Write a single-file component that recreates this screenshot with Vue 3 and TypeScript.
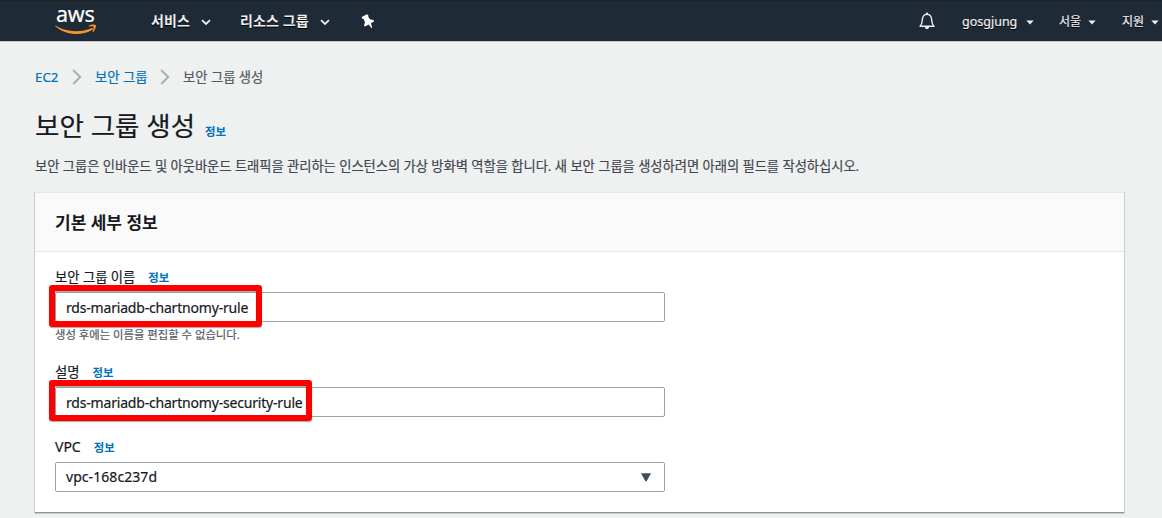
<script setup lang="ts">
interface Account {
  label: string
  kind: string
}

const accounts: Account[] = [
  { label: 'gosgjung', kind: 'user' },
  { label: '서울', kind: 'region' },
  { label: '지원', kind: 'support' },
]
</script>

<template>
  <div class="page">
    <header class="nav">
      <div class="logo">
        <span class="logo-text">aws</span>
        <svg class="smile" viewBox="0 0 42 12" width="42" height="12">
          <path d="M0.7 1.6C10 7.8 25 9.2 36.3 4.2C37.8 3.5 38.7 4.9 37.4 5.8C26 12.7 10 11.2 0.4 2.3C0 1.7 0.2 1.3 0.7 1.6Z" class="orange" />
          <path d="M33.6 1.9C35.6 0.4 39.7 0 40.7 1C41.5 2.2 39.9 6.7 38.1 8.1C37.7 8.4 37.3 8.2 37.5 7.7C38.2 6 39.1 3.4 38.5 2.7C37.9 2 35.5 2.3 34 2.5C33.4 2.6 33.2 2.2 33.6 1.9Z" class="orange" />
        </svg>
      </div>
      <div class="menu services">
        <span class="t">서비스</span>
        <svg class="chev" viewBox="0 0 10 7" width="10" height="7"><path d="M1 1.2L5 5L9 1.2" /></svg>
      </div>
      <div class="menu groups">
        <span class="t">리소스 그룹</span>
        <svg class="chev" viewBox="0 0 10 7" width="10" height="7"><path d="M1 1.2L5 5L9 1.2" /></svg>
      </div>
      <svg class="pin" viewBox="0 0 14 15" width="14" height="15">
        <path d="M0.7 3L6 0.3L7.4 1.4L7.3 3L9.3 5.6L12.6 6L13 7.4L9.9 9.3L11.2 13.7L10.4 14L7.7 10.5L4 12.4L3 11.5L4 8.3L2.8 5.3L1 4.4Z" fill="#fff" />
      </svg>
      <div class="spacer"></div>
      <svg class="bell" viewBox="0 0 18 18" width="18" height="18">
        <path d="M2 14.2C4.5 12 4 9.5 4.4 7C4.8 4.2 6.4 2.4 9 2.4C11.6 2.4 13.2 4.2 13.6 7C14 9.5 13.5 12 16 14.2Z" fill="none" stroke="#eee" stroke-width="1.4" stroke-linejoin="round" />
        <path d="M7.8 2.4V1.6A1.2 1.2 0 0 1 10.2 1.6V2.4ZM6.8 14.7H11.2C11 16.4 10.2 17.1 9 17.1S7 16.4 6.8 14.7Z" fill="#eee" />
      </svg>
      <div v-for="a in accounts" :key="a.kind" class="account" :class="a.kind">
        <span class="t">{{ a.label }}</span>
        <svg class="caret" viewBox="0 0 8 5" width="8" height="5"><path d="M0.3 0.4H7.7L4 4.6Z" fill="#eee" /></svg>
      </div>
    </header>

    <main class="content">
      <nav class="crumbs">
        <a class="c1">EC2</a>
        <svg class="sep" viewBox="0 0 10 16" width="10" height="16"><path d="M1.2 1L8.2 8L1.2 15" /></svg>
        <a class="c2">보안 그룹</a>
        <svg class="sep" viewBox="0 0 10 16" width="10" height="16"><path d="M1.2 1L8.2 8L1.2 15" /></svg>
        <span class="c3">보안 그룹 생성</span>
      </nav>

      <div class="heading">
        <h1>보안 그룹 생성</h1>
        <a class="info">정보</a>
      </div>
      <p class="desc">보안 그룹은 인바운드 및 아웃바운드 트래픽을 관리하는 인스턴스의 가상 방화벽 역할을 합니다. 새 보안 그룹을 생성하려면 아래의 필드를 작성하십시오.</p>

      <section class="card">
        <div class="card-head"><h2>기본 세부 정보</h2></div>
        <div class="card-body">
          <div class="field name">
            <div class="label"><span>보안 그룹 이름</span><a class="info">정보</a></div>
            <div class="input"><span class="value tight">rds-mariadb-chartnomy-rule</span><i class="mark m1"></i></div>
            <div class="hint">생성 후에는 이름을 편집할 수 없습니다.</div>
          </div>
          <div class="field about">
            <div class="label"><span>설명</span><a class="info">정보</a></div>
            <div class="input"><span class="value tight">rds-mariadb-chartnomy-security-rule</span><i class="mark m2"></i></div>
          </div>
          <div class="field">
            <div class="label"><span class="latin">VPC</span><a class="info">정보</a></div>
            <div class="input select">
              <span class="choice">vpc-168c237d</span>
              <svg viewBox="0 0 10 9" width="10" height="9"><path d="M0 0.2H10L5.6 8.2H4.4Z" fill="#414d5c" /></svg>
            </div>
          </div>
        </div>
      </section>
    </main>
  </div>
</template>

<style>
body {
  margin: 0;
  background: #eff1f1;
}
</style>

<style scoped>
.page {
  width: 1162px;
  height: 518px;
  overflow: hidden;
  background: #eff1f1;
  color: #16191f;
  font: 13.3px/20px "Noto Sans", "Noto Sans CJK KR", sans-serif;
  -webkit-text-stroke: 0.2px;
}
.page * {
  box-sizing: border-box;
  white-space: nowrap;
}
svg {
  display: block;
  flex: none;
}
.nav {
  display: flex;
  align-items: center;
  height: 42px;
  border-top: 1px solid #222;
  border-bottom: 1px solid #c3c9cb;
  background: #1e2a36;
  color: #eee;
}
.logo {
  width: 42px;
  margin-left: 55px;
  height: 40px;
}
.logo-text {
  display: block;
  height: 23px;
  padding-left: 1px;
  color: #fff;
  font-size: 21.5px;
  line-height: 25px;
  letter-spacing: -0.2px;
}
.orange {
  fill: #f7902f;
}
.menu,
.account {
  display: flex;
  align-items: center;
}
.menu {
  font-weight: 700;
  font-size: 14px;
  letter-spacing: 0.1px;
  text-shadow: 0 1px 0 #000;
  -webkit-text-stroke: 0;
}
.services {
  margin-left: 54px;
}
.services .t {
  width: 50px;
}
.groups {
  margin-left: 29px;
}
.groups .t {
  width: 80px;
}
.chev {
  margin-top: 2px;
}
.chev path {
  fill: none;
  stroke: #eee;
  stroke-width: 1.8;
}
.pin {
  margin-left: 31px;
}
.spacer {
  flex: 1;
}
.bell {
  margin-right: 26px;
}
.account {
  font-size: 12px;
  text-shadow: 0 1px 0 #000;
}
.account .t {
  padding-top: 2px;
}
.caret {
  margin-top: 2px;
}
.user {
  width: 97px;
}
.user .t {
  width: 64px;
  font-size: 12.5px;
}
.region {
  width: 63px;
}
.region .t,
.support .t {
  width: 29px;
}
.support {
  width: 40px;
}
.content {
  padding: 25px 38px 0 35px;
}
.crumbs {
  display: flex;
  align-items: center;
  height: 20px;
  line-height: 20px;
  color: #545b64;
}
a {
  color: #0073bb;
}
.c1 {
  width: 37px;
}
.c2 {
  width: 65px;
}
.sep {
  margin-right: 13px;
}
.sep path {
  fill: none;
  stroke: #a2b2b2;
  stroke-width: 2;
}
.heading {
  display: flex;
  align-items: baseline;
  height: 40px;
  margin-top: 19px;
}
h1 {
  margin: 0;
  width: 170px;
  font-size: 26.5px;
  line-height: 40px;
  font-weight: 400;
}
.info {
  font-size: 11.4px;
  font-weight: 700;
  -webkit-text-stroke: 0;
}
.desc {
  margin: 10px 0 0;
  color: #414750;
  letter-spacing: -0.045px;
}
.card {
  height: 321px;
  margin-top: 16px;
  background: #fff;
  box-shadow: 1px 0 0 0 #c5cdce, -1px 0 0 0 #c5cdce, 0 1px 1px 0 rgba(0, 28, 36, 0.15);
  border-bottom: 1px solid #879596;
}
.card-head {
  height: 60px;
  padding: 20px 20px 0;
  background: #fafafa;
  border-top: 1px solid #e3e8e8;
  border-bottom: 1px solid #e3e7e7;
}
h2 {
  margin: 0;
  font-size: 17px;
  line-height: 20px;
  -webkit-text-stroke: 0;
}
.card-body {
  padding: 15px 20px 0;
}
.field {
  width: 610px;
}
.name {
  height: 95px;
}
.about {
  height: 75px;
}
.label {
  display: flex;
  gap: 13px;
  align-items: baseline;
  height: 25px;
  line-height: 20px;
}
.latin {
  font-size: 14px;
}
.input {
  position: relative;
  display: flex;
  align-items: center;
  height: 30px;
  padding: 0 13px 0 10px;
  border: 1px solid #95a5a6;
  border-radius: 2px;
  background: #fff;
  font-size: 14px;
}
.value {
  padding-top: 1px;
}
.choice {
  height: 21px;
  letter-spacing: 0.06px;
}
.tight {
  letter-spacing: -0.19px;
}
.select {
  justify-content: space-between;
}
.hint {
  margin-top: 3px;
  font-size: 11.35px;
  line-height: 20px;
  color: #545b64;
}
.mark {
  position: absolute;
  left: -7px;
  top: -8px;
  height: 42px;
  border: 6px solid #f00;
  border-radius: 3px;
  box-shadow: 0 1px 1px rgba(0, 0, 0, 0.35), inset 0 1px 1px rgba(0, 0, 0, 0.35);
}
.m1 {
  width: 213px;
}
.m2 {
  width: 263px;
  height: 41px;
}
</style>
